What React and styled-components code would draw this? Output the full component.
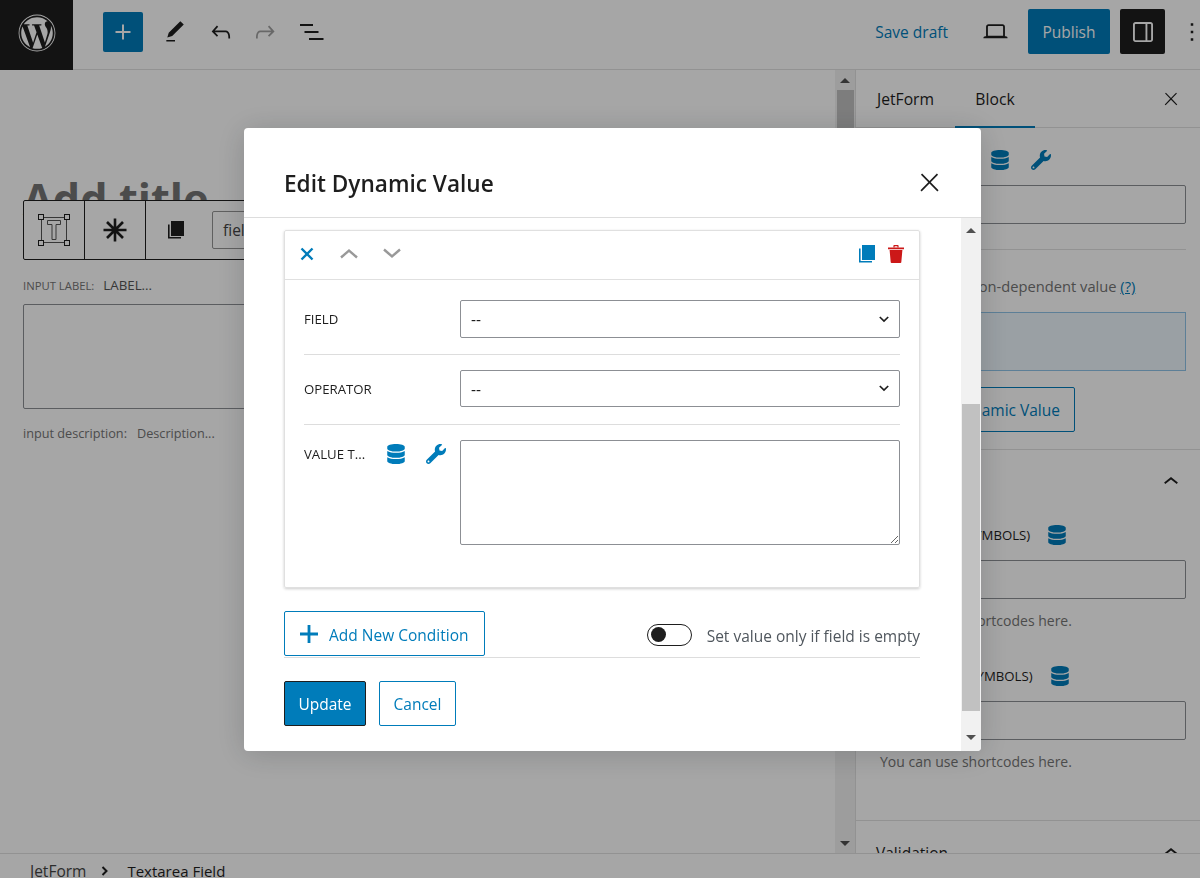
import styled, { createGlobalStyle } from "styled-components";
import { FaWordpress, FaDatabase, FaWrench } from "react-icons/fa";

const GlobalStyle = createGlobalStyle`
  html, body {
    margin: 0;
    padding: 0;
    height: 100%;
    overflow: hidden;
  }
  body {
    font-family: "Open Sans", "Liberation Sans", sans-serif;
    font-size: 15.5px;
    color: #1e1e1e;
    background: #fff;
  }
  * {
    box-sizing: border-box;
  }
`;

const WpIcon = ({ d, size = 24, color = "currentColor" }) => (
  <svg width={size} height={size} viewBox="0 0 24 24" fill={color}>
    <path d={d} />
  </svg>
);

const icons = {
  plus: "M18 11.2h-5.2V6h-1.6v5.2H6v1.6h5.2V18h1.6v-5.2H18z",
  pen: "M20.1 5.1L16.9 2 6.2 12.7l-1.3 4.4 4.5-1.3L20.1 5.1zM4 20.8h8v-1.5H4v1.5z",
  undo: "M18.3 11.7c-.6-.6-1.4-.9-2.3-.9H6.7l2.9-3.3-1.1-1-4.5 5L8.5 16l1-1-2.7-2.7H16c.5 0 .9.2 1.3.5 1 1 1 3.4 1 4.5v.3h1.5v-.2c0-1.5 0-4.3-1.5-5.7z",
  redo: "M15.6 6.5l-1.1 1 2.9 3.3H8c-.9 0-1.7.3-2.3.9-1.4 1.5-1.4 4.2-1.4 5.6v.2h1.5v-.3c0-1.1 0-3.5 1-4.5.3-.3.7-.5 1.3-.5h9.2L14.5 15l1.1 1.1 4.6-4.6-4.6-5z",
  list: "M0 4.1h13v2H0zM4.5 11.1h14v2h-14zM9 18.1h14.5v2H9z",
  laptop: "M20.5 16h-.7V8c0-1.1-.9-2-2-2H6.2c-1.1 0-2 .9-2 2v8h-.7c-.8 0-1.5.7-1.5 1.5h20c0-.8-.7-1.5-1.5-1.5zM5.7 8c0-.3.2-.5.5-.5h11.6c.3 0 .5.2.5.5v7.6H5.7V8z",
  drawer: "M18 4H6c-1.1 0-2 .9-2 2v12c0 1.1.9 2 2 2h12c1.1 0 2-.9 2-2V6c0-1.1-.9-2-2-2zm-4 14.5H6c-.3 0-.5-.2-.5-.5V6c0-.3.2-.5.5-.5h8v13zm4.5-.5c0 .3-.2.5-.5.5h-2.5v-13H18c.3 0 .5.2.5.5v12z",
  more: "M13 19h-2v-2h2v2zm0-6h-2v-2h2v2zm0-6h-2V5h2v2z",
  close: "M13 11.8l6.1-6.3-1-1-6.1 6.2-6.1-6.2-1 1 6.1 6.3-6.5 6.7 1 1 6.5-6.6 6.5 6.6 1-1z",
  chevronUp: "M6.5 12.4L12 8l5.5 4.4-.9 1.2L12 10l-4.6 3.6-.9-1.2z",
};

const TextareaBlockIcon = () => (
  <svg width="34" height="34" viewBox="0 0 34 34" fill="none" stroke="#1e1e1e" strokeWidth="1">
    <rect x="4.5" y="4.5" width="25" height="25" stroke="#555" />
    <rect x="1.5" y="1.5" width="5" height="5" fill="#fff" />
    <rect x="27.5" y="1.5" width="5" height="5" fill="#fff" />
    <rect x="1.5" y="27.5" width="5" height="5" fill="#fff" />
    <rect x="27.5" y="27.5" width="5" height="5" fill="#fff" />
    <path d="M10.5 7.5h13v4h-4.5v15h-4v-15h-4.5z" stroke="#555" />
  </svg>
);

const AsteriskIcon = () => (
  <svg width="24" height="24" viewBox="0 0 24 24" stroke="#1e1e1e" strokeWidth="2.6">
    <path d="M12 .5v23M.5 12h23M4 4l16 16M20 4L4 20" />
  </svg>
);

const CopyIcon = ({ color, size = 20 }) => (
  <svg width={size} height={size} viewBox="0 0 20 20" fill={color}>
    <rect x="5" y="1" width="13" height="15" />
    <path d="M2 4.5h1.6V17H15v1.6H2z" />
  </svg>
);

const TrashIcon = () => (
  <svg width="18" height="20" viewBox="0 0 18 20" fill="#cc1818">
    <path d="M1 3.6h16v1.6H1z" />
    <path d="M2.6 6h12.8l-1.1 12.2c0 .5-.4.8-.9.8H4.6c-.5 0-.9-.3-.9-.8z" />
    <path d="M6.4 3.6V2c0-.6.4-1 1-1h3.2c.6 0 1 .4 1 1v1.6h-1.2V2.2H7.6v1.4z" />
  </svg>
);

const SelectArrow = () => (
  <svg width="10" height="7" viewBox="0 0 10 7" fill="none" stroke="#1e1e1e" strokeWidth="1.7">
    <path d="M.8 1l4.2 4 4.2-4" />
  </svg>
);

const Page = styled.div`
  display: flex;
  flex-direction: column;
  height: 878px;
  overflow: hidden;
`;

const TopBar = styled.header`
  display: flex;
  align-items: center;
  height: 70px;
  padding-bottom: 5px;
  flex-shrink: 0;
  border-bottom: 1px solid #e0e0e0;
`;

const LogoBox = styled.div`
  display: flex;
  align-items: center;
  justify-content: center;
  align-self: flex-start;
  width: 73px;
  height: 70px;
  padding-bottom: 4px;
  background: #1e1e1e;
  color: #fff;
`;

const ToolGroup = styled.div`
  display: flex;
  align-items: center;
  margin-left: 30px;
`;

const InserterButton = styled.div`
  display: flex;
  align-items: center;
  justify-content: center;
  width: 40px;
  height: 40px;
  background: #007cba;
  color: #fff;
  border-radius: 2px;
  margin-right: 19px;
`;

const ToolIcon = styled.div`
  display: flex;
  align-items: center;
  justify-content: center;
  margin-right: ${(p) => p.$gap || 0}px;
  color: ${(p) => (p.$muted ? "#a0a0a0" : "#1e1e1e")};
`;

const BarRight = styled.div`
  display: flex;
  align-items: center;
  margin-left: auto;
  margin-top: -1px;
`;

const SaveDraft = styled.span`
  color: #007cba;
  margin-right: 33px;
`;

const PublishButton = styled.div`
  display: flex;
  align-items: center;
  justify-content: center;
  width: 82px;
  height: 45px;
  background: #007cba;
  color: #fff;
  border-radius: 2px;
  margin-left: 18px;
  margin-right: 10px;
`;

const DrawerButton = styled.div`
  display: flex;
  align-items: center;
  justify-content: center;
  width: 45px;
  height: 45px;
  background: #1e1e1e;
  color: #fff;
  border-radius: 2px;
  margin-right: 12px;
`;

const MoreButton = styled.div`
  display: flex;
  margin-right: -7px;
`;

const Workspace = styled.div`
  flex: 1;
  display: flex;
  min-height: 0;
`;

const Canvas = styled.main`
  width: 835px;
  padding: 102px 0 0 23px;
  overflow: hidden;
  flex-shrink: 0;
`;

const PostTitle = styled.h1`
  margin: 0;
  height: 28px;
  font-size: 43.3px;
  line-height: 54px;
  font-weight: 700;
  color: #757575;
  white-space: nowrap;
`;

const BlockToolbar = styled.div`
  display: flex;
  align-items: stretch;
  width: 520px;
  height: 60px;
  background: #fff;
  border: 1px solid #1e1e1e;
  border-radius: 2px;
  position: relative;
`;

const ToolbarCell = styled.div`
  display: flex;
  align-items: center;
  justify-content: center;
  width: 61px;
  border-right: 1px solid #1e1e1e;
`;

const ToolbarPlain = styled.div`
  display: flex;
  align-items: center;
  justify-content: center;
  width: 60px;
`;

const NameInput = styled.div`
  display: flex;
  align-items: center;
  width: 220px;
  height: 38px;
  margin: 10px 0 0 6px;
  padding-left: 10px;
  border: 1px solid #949494;
  border-radius: 2px;
  color: #444;
`;

const LabelRow = styled.div`
  display: flex;
  align-items: center;
  margin-top: 15px;
  height: 20px;
`;

const SmallCaption = styled.span`
  font-size: 11.3px;
  color: #757575;
  margin-right: 9px;
`;

const LabelValue = styled.span`
  font-size: 13.3px;
  color: #555;
`;

const FakeTextarea = styled.div`
  width: 500px;
  height: 105px;
  margin-top: 9px;
  border: 1px solid #8c8f94;
  border-radius: 2px;
`;

const DescriptionRow = styled.div`
  display: flex;
  align-items: center;
  margin-top: 14px;
  height: 20px;
  font-size: 12.7px;
  color: #757575;
`;

const DescriptionValue = styled.span`
  margin-left: 10px;
`;

const ScrollTrack = styled.div`
  display: flex;
  flex-direction: column;
  flex-shrink: 0;
  width: ${(p) => p.$width}px;
  background: ${(p) => p.$bg};
`;

const ArrowBox = styled.div`
  display: flex;
  align-items: center;
  justify-content: center;
  height: ${(p) => p.$height}px;
  margin-top: ${(p) => (p.$bottom ? "auto" : "0")};
  &::after {
    content: "";
    border-left: 5px solid transparent;
    border-right: 5px solid transparent;
    ${(p) => (p.$bottom ? "border-top" : "border-bottom")}: 5px solid #505050;
  }
`;

const ScrollThumb = styled.div`
  margin: ${(p) => p.$top}px auto 0;
  width: ${(p) => p.$width}px;
  height: ${(p) => p.$height}px;
  background: ${(p) => p.$bg};
`;

const Sidebar = styled.aside`
  width: 345px;
  flex-shrink: 0;
  border-left: 1px solid #e0e0e0;
  overflow: hidden;
`;

const TabBar = styled.div`
  display: flex;
  align-items: stretch;
  height: 58px;
  border-bottom: 1px solid #e0e0e0;
`;

const Tab = styled.div`
  display: flex;
  align-items: center;
  justify-content: center;
  width: ${(p) => p.$width}px;
  font-weight: 500;
  font-size: 15.7px;
  padding-top: 2px;
  margin-bottom: -1px;
  border-bottom: 2px solid ${(p) => (p.$active ? "#007cba" : "transparent")};
  color: #1e1e1e;
`;

const TabClose = styled.div`
  display: flex;
  align-items: center;
  margin-left: auto;
  margin-right: 19px;
`;

const Section = styled.section`
  display: flow-root;
  padding: 0 14px 0 24px;
  height: ${(p) => p.$height}px;
  border-bottom: 1px solid #e0e0e0;
`;

const IconRow = styled.div`
  display: flex;
  align-items: center;
  justify-content: flex-end;
  gap: 21px;
  height: 22px;
  margin: 21px 135px 0 0;
  color: #007cba;
`;

const SideInput = styled.div`
  height: ${(p) => p.$height || 39}px;
  margin-top: ${(p) => p.$top}px;
  border: 1px solid #8c8f94;
  border-radius: 2px;
`;

const SubDivider = styled.div`
  height: 1px;
  margin-top: 25px;
  background: #e0e0e0;
`;

const ToggleLine = styled.div`
  margin-top: 26px;
  height: 20px;
  line-height: 20px;
  padding-left: 50px;
  font-size: 14.7px;
  color: #757575;
  white-space: nowrap;
`;

const HelpLink = styled.span`
  color: #007cba;
  text-decoration: underline;
`;

const TintedBox = styled.div`
  height: 59px;
  margin-top: 16px;
  border: 1px solid #8fc4e8;
  background: #edf6fc;
`;

const OutlineSideButton = styled.div`
  display: flex;
  align-items: center;
  justify-content: flex-end;
  width: 195px;
  height: 45px;
  margin-top: 16px;
  padding-right: 14px;
  border: 1px solid #007cba;
  border-radius: 2px;
  color: #007cba;
`;

const SectionHead = styled.div`
  display: flex;
  align-items: center;
  justify-content: flex-end;
  height: 24px;
  margin-top: ${(p) => p.$top}px;
  color: #1e1e1e;
`;

const FieldLabel = styled.div`
  display: flex;
  align-items: center;
  height: 22px;
  margin-top: ${(p) => p.$top}px;
  font-size: 13.2px;
  font-weight: 500;
  white-space: nowrap;
`;

const FieldDb = styled.span`
  display: flex;
  color: #007cba;
  margin-left: ${(p) => p.$gap}px;
`;

const HelpText = styled.p`
  margin: ${(p) => p.$top}px 0 0;
  line-height: 20px;
  font-size: 14px;
  color: #757575;
  white-space: nowrap;
`;

const ValidationHead = styled.div`
  display: flex;
  align-items: center;
  justify-content: space-between;
  padding: 17px 14px 0 20px;
  font-weight: 500;
`;

const Footer = styled.footer`
  display: flex;
  align-items: center;
  flex-shrink: 0;
  height: 25px;
  padding: 9px 0 0 30px;
  border-top: 1px solid #e0e0e0;
  background: #fff;
  position: relative;
  overflow: hidden;
`;

const Crumb = styled.span`
  color: ${(p) => (p.$current ? "#1e1e1e" : "#444")};
  font-size: ${(p) => (p.$current ? "15px" : "15.5px")};
`;

const CrumbSep = styled.span`
  display: flex;
  margin: 0 17px 0 14px;
`;

const Overlay = styled.div`
  position: fixed;
  inset: 0;
  background: rgba(0, 0, 0, 0.35);
`;

const Modal = styled.div`
  position: fixed;
  left: 244px;
  top: 128px;
  display: flex;
  flex-direction: column;
  width: 737px;
  height: 623px;
  background: #fff;
  border-radius: 4px;
  box-shadow: 0 3px 30px rgba(25, 30, 35, 0.2);
  overflow: hidden;
`;

const ModalHeader = styled.div`
  display: flex;
  align-items: center;
  justify-content: space-between;
  flex-shrink: 0;
  height: 90px;
  padding: 22px 37px 0 40px;
  border-bottom: 1px solid #ddd;
`;

const ModalTitle = styled.h2`
  margin: 0;
  font-size: 22.6px;
  font-weight: 600;
  color: #1e1e1e;
`;

const ModalClose = styled.div`
  display: flex;
  margin-top: -2px;
`;

const ModalBody = styled.div`
  flex: 1;
  display: flex;
  min-height: 0;
`;

const ModalContent = styled.div`
  flex: 1;
  padding: 12px 41px 0 40px;
  min-width: 0;
`;

const ConditionCard = styled.div`
  height: 358px;
  border: 1px solid #e0e0e0;
  border-radius: 2px;
  box-shadow: 0 1px 3px rgba(0, 0, 0, 0.2);
`;

const CardHeader = styled.div`
  display: flex;
  align-items: center;
  height: 49px;
  padding: 0 14px 3px 13px;
  border-bottom: 1px solid #e0e0e0;
`;

const CardAction = styled.div`
  display: flex;
  width: ${(p) => p.$width}px;
  justify-content: center;
  margin-right: ${(p) => p.$gap || 0}px;
  color: ${(p) => p.$color};
`;

const CardActionsEnd = styled.div`
  display: flex;
  align-items: center;
  gap: 10px;
  margin-left: auto;
`;

const CardBody = styled.div`
  padding: 0 19px;
`;

const ConditionRow = styled.div`
  display: flex;
  padding: ${(p) => (p.$last ? "15px 0 0" : "20px 0 16px")};
  border-bottom: ${(p) => (p.$last ? "0" : "1px solid #ddd")};
  &:nth-child(2) {
    padding-top: 15px;
    padding-bottom: 17px;
  }
`;

const RowLabel = styled.div`
  display: flex;
  align-items: ${(p) => (p.$top ? "flex-start" : "center")};
  width: 156px;
  flex-shrink: 0;
  font-size: 13.2px;
  font-weight: 500;
  line-height: 28px;
  color: #1e1e1e;
`;

const RowLabelText = styled.span`
  width: 82px;
`;

const RowIcons = styled.span`
  display: flex;
  align-items: center;
  height: 28px;
  gap: 20px;
  color: #007cba;
`;

const SelectBox = styled.div`
  display: flex;
  align-items: center;
  justify-content: space-between;
  flex: 1;
  height: ${(p) => p.$height}px;
  padding: 0 10px;
  border: 1px solid #8c8f94;
  border-radius: 2px;
  color: #1e1e1e;
`;

const ValueArea = styled.textarea`
  flex: 1;
  height: 105px;
  margin: 0;
  border: 1px solid #8c8f94;
  border-radius: 2px;
  resize: vertical;
  outline: none;
  background: #fff;
`;

const OptionsRow = styled.div`
  display: flex;
  align-items: flex-start;
  justify-content: space-between;
  height: 46px;
  margin-top: 23px;
  border-bottom: 1px solid #ddd;
  box-sizing: content-box;
`;

const OutlineButton = styled.div`
  display: flex;
  align-items: center;
  justify-content: ${(p) => (p.$start ? "flex-start" : "center")};
  width: ${(p) => p.$width}px;
  height: 45px;
  padding: ${(p) => (p.$start ? "3px 0 0 15px" : "0")};
  border: 1px solid #007cba;
  border-radius: 2px;
  color: #007cba;
  background: #fff;
  flex-shrink: 0;
`;

const PlusMark = styled.span`
  display: flex;
  margin: -3px 11px 0 0;
`;

const ToggleGroup = styled.div`
  display: flex;
  align-items: center;
  gap: 15px;
  margin-top: 11px;
`;

const ToggleTrack = styled.div`
  display: flex;
  align-items: center;
  width: 45px;
  height: 22px;
  padding-left: 3px;
  border: 1px solid #1e1e1e;
  border-radius: 11px;
`;

const ToggleKnob = styled.div`
  width: 15px;
  height: 15px;
  border-radius: 50%;
  background: #1e1e1e;
`;

const ToggleText = styled.span`
  padding-top: 3px;
  color: #50575e;
  white-space: nowrap;
`;

const FooterActions = styled.div`
  display: flex;
  gap: 13px;
  margin-top: 23px;
`;

const PrimaryButton = styled.div`
  display: flex;
  align-items: center;
  justify-content: center;
  width: 82px;
  height: 45px;
  background: #007cba;
  border: 1px solid #1e1e1e;
  border-radius: 2px;
  color: #fff;
  font-weight: 500;
`;

export default function App() {
  return (
    <>
      <GlobalStyle />
      <Page>
        <TopBar>
          <LogoBox>
            <FaWordpress size={38} />
          </LogoBox>
          <ToolGroup>
            <InserterButton>
              <WpIcon d={icons.plus} size={30} />
            </InserterButton>
            <ToolIcon $gap={19}><WpIcon d={icons.pen} size={26} /></ToolIcon>
            <ToolIcon $gap={16}><WpIcon d={icons.undo} size={28} /></ToolIcon>
            <ToolIcon $gap={21} $muted><WpIcon d={icons.redo} size={28} /></ToolIcon>
            <ToolIcon><WpIcon d={icons.list} /></ToolIcon>
          </ToolGroup>
          <BarRight>
            <SaveDraft>Save draft</SaveDraft>
            <WpIcon d={icons.laptop} size={29} />
            <PublishButton>Publish</PublishButton>
            <DrawerButton><WpIcon d={icons.drawer} size={30} /></DrawerButton>
            <MoreButton><WpIcon d={icons.more} size={30} /></MoreButton>
          </BarRight>
        </TopBar>

        <Workspace>
          <Canvas>
            <PostTitle>Add title</PostTitle>
            <BlockToolbar>
              <ToolbarCell><TextareaBlockIcon /></ToolbarCell>
              <ToolbarCell><AsteriskIcon /></ToolbarCell>
              <ToolbarPlain><CopyIcon color="#1e1e1e" size={20} /></ToolbarPlain>
              <NameInput>field_name</NameInput>
            </BlockToolbar>
            <LabelRow>
              <SmallCaption>INPUT LABEL:</SmallCaption>
              <LabelValue>LABEL...</LabelValue>
            </LabelRow>
            <FakeTextarea />
            <DescriptionRow>
              input description:
              <DescriptionValue>Description...</DescriptionValue>
            </DescriptionRow>
          </Canvas>

          <ScrollTrack $width={20} $bg="#f1f1f1">
            <ArrowBox $height={20} />
            <ScrollThumb $top={0} $width={17} $height={240} $bg="#c1c1c1" />
            <ArrowBox $height={20} $bottom />
          </ScrollTrack>

          <Sidebar>
            <TabBar>
              <Tab $width={99}>JetForm</Tab>
              <Tab $width={80} $active>Block</Tab>
              <TabClose><WpIcon d={icons.close} size={20} /></TabClose>
            </TabBar>
            <Section $height={322}>
              <IconRow>
                <FaDatabase size={20} />
                <FaWrench size={20} />
              </IconRow>
              <SideInput $top={14} $height={39} />
              <SubDivider />
              <ToggleLine>
                Condition-dependent value <HelpLink>(?)</HelpLink>
              </ToggleLine>
              <TintedBox />
              <OutlineSideButton>Set Dynamic Value</OutlineSideButton>
            </Section>
            <Section $height={371}>
              <SectionHead $top={20}><WpIcon d={icons.chevronUp} size={30} /></SectionHead>
              <FieldLabel $top={30}>
                MIN LENGTH (SYMBOLS)
                <FieldDb $gap={17}><FaDatabase size={20} /></FieldDb>
              </FieldLabel>
              <SideInput $top={14} $height={39} />
              <HelpText $top={12}>You can use shortcodes here.</HelpText>
              <FieldLabel $top={34}>
                MAX LENGTH (SYMBOLS)
                <FieldDb $gap={17}><FaDatabase size={20} /></FieldDb>
              </FieldLabel>
              <SideInput $top={14} $height={39} />
              <HelpText $top={12}>You can use shortcodes here.</HelpText>
            </Section>
            <ValidationHead>
              Validation
              <WpIcon d={icons.chevronUp} size={30} />
            </ValidationHead>
          </Sidebar>
        </Workspace>

        <Footer>
          <Crumb>JetForm</Crumb>
          <CrumbSep>
            <svg width="10" height="12" viewBox="0 0 10 12" fill="none" stroke="#1e1e1e" strokeWidth="2">
              <path d="M2.5 2l4 4-4 4" />
            </svg>
          </CrumbSep>
          <Crumb $current>Textarea Field</Crumb>
        </Footer>
      </Page>

      <Overlay />

      <Modal>
        <ModalHeader>
          <ModalTitle>Edit Dynamic Value</ModalTitle>
          <ModalClose><WpIcon d={icons.close} size={29} /></ModalClose>
        </ModalHeader>
        <ModalBody>
          <ModalContent>
            <ConditionCard>
              <CardHeader>
                <CardAction $width={18} $gap={24} $color="#007cba">
                  <svg width="14" height="14" viewBox="0 0 14 14" stroke="currentColor" strokeWidth="2.4">
                    <path d="M1.5 1.5l11 11M12.5 1.5l-11 11" />
                  </svg>
                </CardAction>
                <CardAction $width={18} $gap={25} $color="#999">
                  <svg width="18" height="11" viewBox="0 0 18 11" fill="none" stroke="currentColor" strokeWidth="2.4">
                    <path d="M1 9.5l8-7 8 7" />
                  </svg>
                </CardAction>
                <CardAction $width={18} $color="#999">
                  <svg width="18" height="11" viewBox="0 0 18 11" fill="none" stroke="currentColor" strokeWidth="2.4">
                    <path d="M1 1.5l8 7 8-7" />
                  </svg>
                </CardAction>
                <CardActionsEnd>
                  <CopyIcon color="#007cba" size={20} />
                  <TrashIcon />
                </CardActionsEnd>
              </CardHeader>
              <CardBody>
                <ConditionRow>
                  <RowLabel>FIELD</RowLabel>
                  <SelectBox $height={38}>
                    --
                    <SelectArrow />
                  </SelectBox>
                </ConditionRow>
                <ConditionRow>
                  <RowLabel>OPERATOR</RowLabel>
                  <SelectBox $height={37}>
                    --
                    <SelectArrow />
                  </SelectBox>
                </ConditionRow>
                <ConditionRow $last>
                  <RowLabel $top>
                    <RowLabelText>VALUE T...</RowLabelText>
                    <RowIcons>
                      <FaDatabase size={20} />
                      <FaWrench size={20} />
                    </RowIcons>
                  </RowLabel>
                  <ValueArea />
                </ConditionRow>
              </CardBody>
            </ConditionCard>

            <OptionsRow>
              <OutlineButton $width={201} $start>
                <PlusMark>
                  <svg width="18" height="18" viewBox="0 0 18 18" fill="currentColor">
                    <path d="M7.6 0h2.8v7.6H18v2.8h-7.6V18H7.6v-7.6H0V7.6h7.6z" />
                  </svg>
                </PlusMark>
                Add New Condition
              </OutlineButton>
              <ToggleGroup>
                <ToggleTrack><ToggleKnob /></ToggleTrack>
                <ToggleText>Set value only if field is empty</ToggleText>
              </ToggleGroup>
            </OptionsRow>

            <FooterActions>
              <PrimaryButton>Update</PrimaryButton>
              <OutlineButton $width={77}>Cancel</OutlineButton>
            </FooterActions>
          </ModalContent>

          <ScrollTrack $width={20} $bg="#f1f1f1">
            <ArrowBox $height={24} />
            <ScrollThumb $top={162} $width={18} $height={307} $bg="#c1c1c1" />
            <ArrowBox $height={28} $bottom />
          </ScrollTrack>
        </ModalBody>
      </Modal>
    </>
  );
}
